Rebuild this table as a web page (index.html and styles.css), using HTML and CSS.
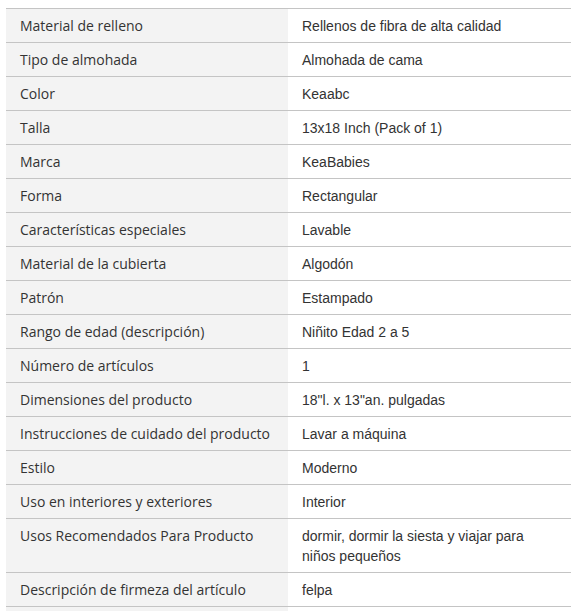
FILE: index.html
```html
<!DOCTYPE html>
<html lang="es">
<head>
<meta charset="utf-8">
<link rel="stylesheet" href="styles.css">
</head>
<body>
<table class="specs">
  <tbody>
    <tr><th>Material de relleno</th><td>Rellenos de fibra de alta calidad</td></tr>
    <tr><th>Tipo de almohada</th><td>Almohada de cama</td></tr>
    <tr><th>Color</th><td>Keaabc</td></tr>
    <tr><th>Talla</th><td>13x18 Inch (Pack of 1)</td></tr>
    <tr><th>Marca</th><td>KeaBabies</td></tr>
    <tr><th>Forma</th><td>Rectangular</td></tr>
    <tr><th>Características especiales</th><td>Lavable</td></tr>
    <tr><th>Material de la cubierta</th><td>Algodón</td></tr>
    <tr><th>Patrón</th><td>Estampado</td></tr>
    <tr><th>Rango de edad (descripción)</th><td>Niñito Edad 2 a 5</td></tr>
    <tr><th>Número de artículos</th><td>1</td></tr>
    <tr><th>Dimensiones del producto</th><td>18"l. x 13"an. pulgadas</td></tr>
    <tr><th>Instrucciones de cuidado del producto</th><td>Lavar a máquina</td></tr>
    <tr><th>Estilo</th><td>Moderno</td></tr>
    <tr><th>Uso en interiores y exteriores</th><td>Interior</td></tr>
    <tr><th>Usos Recomendados Para Producto</th><td>dormir, dormir la siesta y viajar para niños pequeños</td></tr>
    <tr><th>Descripción de firmeza del artículo</th><td>felpa</td></tr>
    <tr class="empty"><th></th><td></td></tr>
  </tbody>
</table>
</body>
</html>
```
FILE: styles.css
```css
html, body {
  margin: 0;
  padding: 0;
  background: #ffffff;
}

.specs {
  margin: 8px 0 0 6px;
  width: 565px;
  border-collapse: collapse;
  table-layout: fixed;
  border-top: 1px solid #c4c4c4;
}

.specs tr {
  border-bottom: 1px solid #c4c4c4;
}

.specs th,
.specs td {
  vertical-align: top;
  text-align: left;
  padding: 7px 14px 6px 14px;
  line-height: 20px;
  font-size: 14px;
}

.specs th {
  width: 254px;
  background: #f3f3f3;
  font-weight: normal;
  color: #333333;
  font-family: "Open Sans", "DejaVu Sans", sans-serif;
}

.specs td {
  color: #333333;
  font-family: "Liberation Sans", Arial, sans-serif;
}

.specs .empty th,
.specs .empty td {
  height: 20px;
}
```
